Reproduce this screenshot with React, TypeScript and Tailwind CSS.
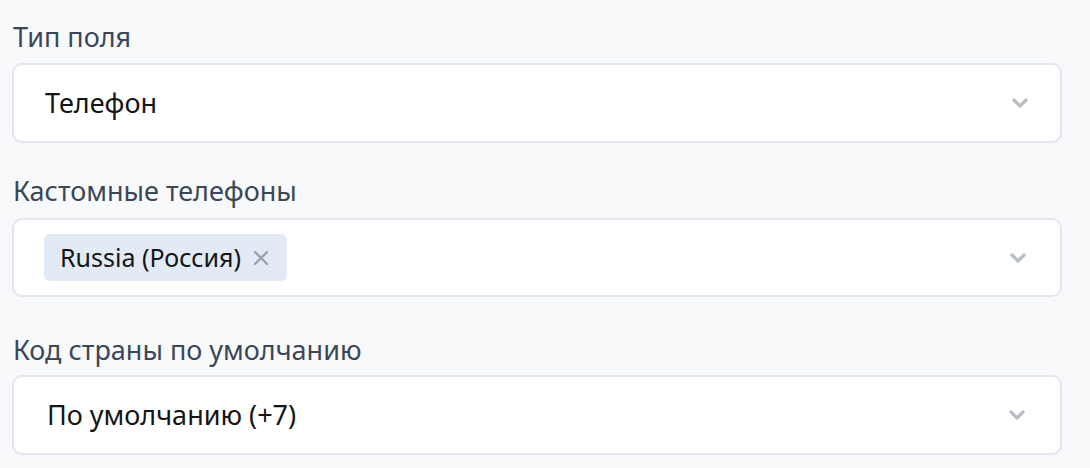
import { ChevronDown, X } from 'lucide-react';

const Chevron = () => (
  <ChevronDown className="w-6 h-6 text-[#b9bdc6]" strokeWidth={3.3} />
);

const App = () => {
  return (
    <div className="w-[1090px] h-[468px] bg-[#f8f9fb] px-3 pt-[22px] font-['Noto_Sans',sans-serif]">
      {/* Тип поля */}
      <div className="text-[27px] leading-[30px] text-[#3b4757] pl-px">Тип поля</div>
      <div className="mt-[11px] h-[80px] w-[1050px] bg-white border-2 border-[#e3e6ee] rounded-[10px] flex items-center justify-between pl-[31px] pr-[28px]">
        <span className="text-[27px] text-[#151515]">Телефон</span>
        <Chevron />
      </div>

      {/* Кастомные телефоны */}
      <div className="mt-[33px] text-[27px] leading-[30px] text-[#3b4757] pl-px">Кастомные телефоны</div>
      <div className="mt-[12px] h-[79px] w-[1050px] bg-white border-2 border-[#e3e6ee] rounded-[10px] flex items-center justify-between pl-[30px] pr-[30px]">
        <div className="h-[47px] bg-[#e1eaf5] rounded-[6px] flex items-center pl-[16px] pr-[14px] gap-[8px]">
          <span className="text-[25px] text-[#151515]">Russia (Россия)</span>
          <X className="w-6 h-6 text-[#9aa1ad]" strokeWidth={2.3} />
        </div>
        <Chevron />
      </div>

      {/* Код страны по умолчанию */}
      <div className="mt-[38px] text-[27px] leading-[30px] text-[#3b4757] pl-px">Код страны по умолчанию</div>
      <div className="mt-[10px] h-[80px] w-[1050px] bg-white border-2 border-[#e3e6ee] rounded-[10px] flex items-center justify-between pl-[33px] pr-[31px]">
        <span className="text-[27px] text-[#151515]">По умолчанию (+7)</span>
        <Chevron />
      </div>
    </div>
  );
};

export default App;
